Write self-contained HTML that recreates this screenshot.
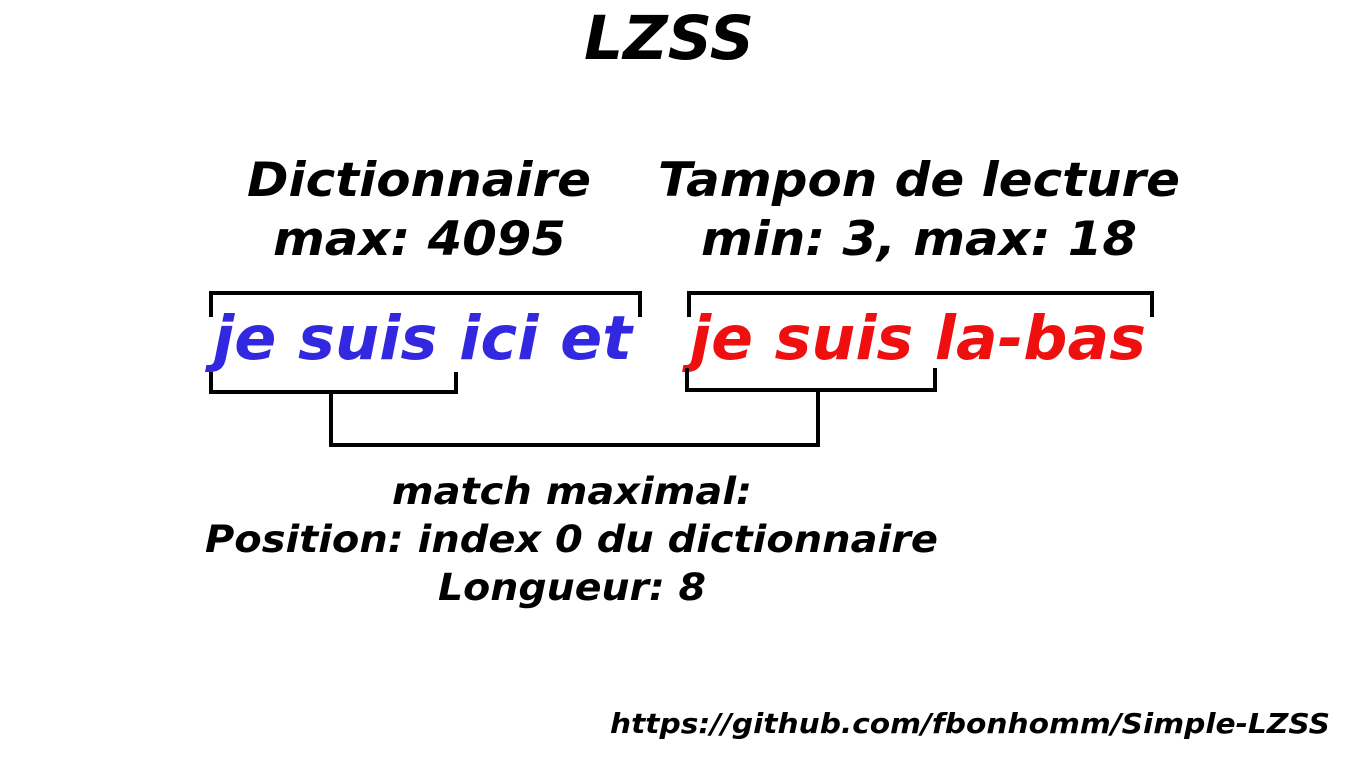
<!DOCTYPE html>
<html><head><meta charset="utf-8"><style>html,body{margin:0;padding:0;background:#fff;width:1366px;height:768px;overflow:hidden}</style></head>
<body>
<svg width="1366" height="768" xmlns="http://www.w3.org/2000/svg" font-family="DejaVu Sans, Liberation Sans, sans-serif" font-weight="bold" font-style="oblique">
<text x="584" y="59" font-size="61" textLength="170" lengthAdjust="spacingAndGlyphs">LZSS</text>
<text x="247" y="196" font-size="47" textLength="344" lengthAdjust="spacingAndGlyphs">Dictionnaire</text>
<text x="273" y="255" font-size="47" textLength="293" lengthAdjust="spacingAndGlyphs">max: 4095</text>
<text x="658" y="196" font-size="47" textLength="522" lengthAdjust="spacingAndGlyphs">Tampon de lecture</text>
<text x="701" y="255" font-size="47" textLength="436" lengthAdjust="spacingAndGlyphs">min: 3, max: 18</text>
<text x="213" y="359" font-size="61" fill="#3128e0" textLength="419" lengthAdjust="spacingAndGlyphs">je suis ici et</text>
<text x="690" y="359" font-size="61" fill="#f00f0f" textLength="456" lengthAdjust="spacingAndGlyphs">je suis la-bas</text>
<text x="392" y="504" font-size="37" textLength="360" lengthAdjust="spacingAndGlyphs">match maximal:</text>
<text x="205" y="552" font-size="37" textLength="733" lengthAdjust="spacingAndGlyphs">Position: index 0 du dictionnaire</text>
<text x="438" y="600" font-size="37" textLength="268" lengthAdjust="spacingAndGlyphs">Longueur: 8</text>
<text x="610" y="733" font-size="28" textLength="720" lengthAdjust="spacingAndGlyphs">https://github.com/fbonhomm/Simple-LZSS</text>
<g fill="none" stroke="#000" stroke-width="4">
<polyline points="211,317 211,293 640,293 640,317"/>
<polyline points="689,317 689,293 1152,293 1152,317"/>
<polyline points="211,372 211,392 456,392 456,372"/>
<polyline points="687,368 687,390 935,390 935,368"/>
<polyline points="331,392 331,445 818,445 818,390"/>
</g>
</svg>
</body></html>
